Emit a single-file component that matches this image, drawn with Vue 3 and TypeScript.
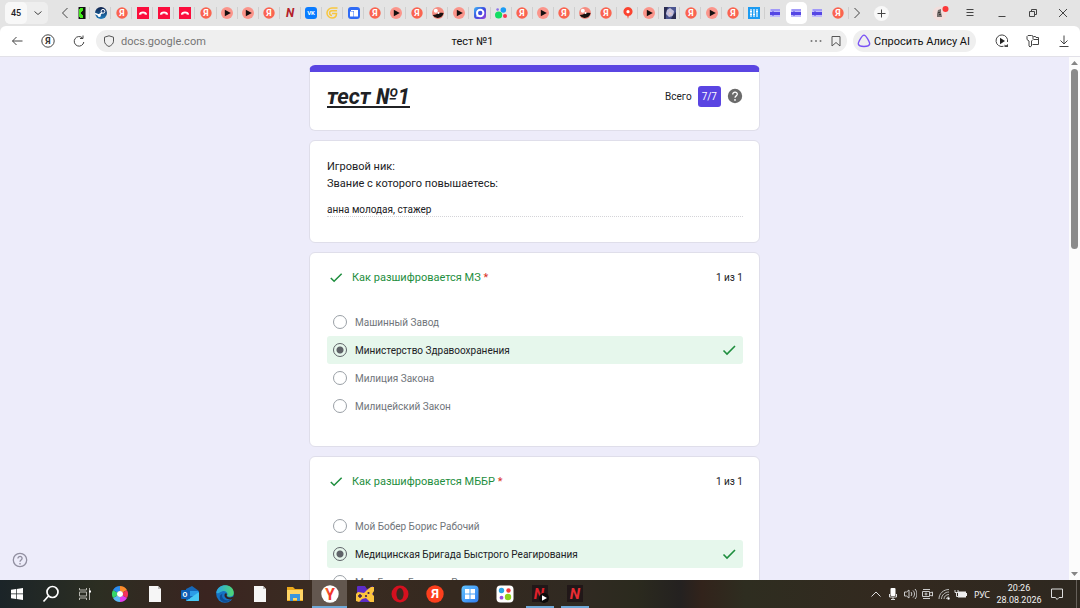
<script setup lang="ts">
import { ref } from 'vue'

interface Question {
  id: string
  title: string
  score: string
  options: string[]
  answer: string
}

interface Letter {
  text: string
  x: number
  y: number
  size: number
  fill: string
  italic?: boolean
}

const tabs: string[] = [
  'kick', 'steam', 'ya', 'phone', 'phone', 'phone', 'ya', 'play', 'play', 'ya', 'netflix', 'vk', 'gold',
  'docs', 'ya', 'play', 'ya', 'face', 'play', 'ring', 'dots', 'ya', 'play', 'ya', 'face', 'ya', 'pin',
  'play', 'anime', 'ya', 'play', 'ya', 'sliders', 'forms', 'forms', 'forms', 'ya',
]
const activeTab = 34

const tabLetters: Record<string, Letter> = {
  ya: { text: 'Я', x: 6, y: 9, size: 9, fill: '#fff' },
  netflix: { text: 'N', x: 6, y: 10, size: 12, fill: '#b3202a', italic: true },
  vk: { text: 'VK', x: 6, y: 8, size: 6, fill: '#fff' },
}

const apps = [
  { icon: 'copilot', label: 'Галерея' },
  { icon: 'file', label: 'Файл' },
  { icon: 'outlook', label: 'Outlook' },
  { icon: 'edge', label: 'Edge' },
  { icon: 'file', label: 'Файл' },
  { icon: 'folder', label: 'Проводник' },
  { icon: 'browser', label: 'Браузер', active: true, running: true },
  { icon: 'games', label: 'Игры' },
  { icon: 'opera', label: 'Opera' },
  { icon: 'yandex', label: 'Яндекс' },
  { icon: 'tiles', label: 'Виджеты' },
  { icon: 'fourdots', label: 'Приложения' },
  { icon: 'nplay', label: 'Видео', running: true },
  { icon: 'nred', label: 'Видео', running: true },
]

const appLetters: Record<string, Letter> = {
  outlook: { text: 'O', x: 4, y: 12, size: 7, fill: '#fff' },
  browser: { text: 'Y', x: 9, y: 15, size: 16, fill: 'url(#g-browser)' },
  yandex: { text: 'Я', x: 9, y: 13, size: 13, fill: '#fff' },
  nplay: { text: 'N', x: 8, y: 14, size: 15, fill: '#e0202a', italic: true },
  nred: { text: 'N', x: 9, y: 14, size: 15, fill: '#e82c33', italic: true },
}

const tray = ['up', 'mic', 'speaker', 'camera', 'wifi', 'battery']

const address = ref('docs.google.com')
const nick = ref('анна молодая, стажер')

const questions = ref<Question[]>([
  {
    id: 'q1',
    title: 'Как разшифровается МЗ',
    score: '1 из 1',
    options: ['Машинный Завод', 'Министерство Здравоохранения', 'Милиция Закона', 'Милицейский Закон'],
    answer: 'Министерство Здравоохранения',
  },
  {
    id: 'q2',
    title: 'Как разшифровается МББР',
    score: '1 из 1',
    options: ['Мой Бобер Борис Рабочий', 'Медицинская Бригада Быстрого Реагирования', 'Моя Белка Быстрая Рука'],
    answer: 'Медицинская Бригада Быстрого Реагирования',
  },
])
</script>

<template>
  <div class="screen">
    <svg class="sprite" aria-hidden="true">
      <defs>
        <linearGradient id="g-ring" x1="0" y1="0" x2="1" y2="1">
          <stop offset="0" stop-color="#3fb7f5" /><stop offset=".5" stop-color="#3d4be0" /><stop offset="1" stop-color="#9a45d8" />
        </linearGradient>
        <linearGradient id="g-steam" x1="0" y1="0" x2="0" y2="1">
          <stop offset="0" stop-color="#10204a" /><stop offset="1" stop-color="#1f7fc0" />
        </linearGradient>
        <linearGradient id="g-edge" x1="0" y1="0" x2="1" y2="0">
          <stop offset="0" stop-color="#2aa5e8" /><stop offset="1" stop-color="#4fd870" />
        </linearGradient>
        <linearGradient id="g-tiles" x1="0" y1="0" x2="1" y2="1">
          <stop offset="0" stop-color="#62c4ff" /><stop offset="1" stop-color="#2f7df0" />
        </linearGradient>
        <linearGradient id="g-browser" x1="0" y1="0" x2="1" y2="0">
          <stop offset="0" stop-color="#fb7a2c" /><stop offset=".5" stop-color="#f0302a" /><stop offset="1" stop-color="#f5452a" />
        </linearGradient>
      </defs>

      <symbol id="t-kick" viewBox="0 0 12 12"><path fill="#111" d="M0 0h12v12H0z" /><path fill="#42e81c" d="M9 1v3H8v1H7v2h1v1h1v3H6v-1H5V2h1V1z" /></symbol>
      <symbol id="t-steam" viewBox="0 0 12 12">
        <circle cx="6" cy="6" r="6" fill="url(#g-steam)" />
        <path d="M0 6.500l4 1.700 3.500-3.200" stroke="#fff" stroke-width="1.600" fill="none" />
        <circle cx="8" cy="4.300" r="1.900" fill="#24477c" stroke="#fff" /><circle cx="4.300" cy="8.500" r="1.500" fill="#fff" />
      </symbol>
      <symbol id="t-ya" viewBox="0 0 12 12"><circle cx="6" cy="6" r="5.700" fill="#fa6450" /></symbol>
      <symbol id="t-phone" viewBox="0 0 12 12"><path fill="#fb0d3c" d="M0 0h12v12H0z" /><path d="M2 7.700C1.500 3.300 10.500 3.300 10 7.700L7.500 7.400V6.500h-3v.900z" fill="#fff" /></symbol>
      <symbol id="t-play" viewBox="0 0 12 12"><circle cx="6" cy="6" r="6" fill="#fb958b" /><path d="M3.800 2.700L9.800 6l-6 3.300z" fill="#151010" /></symbol>
      <symbol id="t-netflix" viewBox="0 0 12 12" />
      <symbol id="t-vk" viewBox="0 0 12 12"><rect width="12" height="12" rx="3" fill="#0a7cff" /></symbol>
      <symbol id="t-gold" viewBox="0 0 12 12" fill="none" stroke="#f8c63e" stroke-width="1.500">
        <path d="M11.500 1H6a5 5 0 0 0 0 10c3 0 4.500-2 4.500-4.500H6" /><path d="M11 3.700H6a2.400 2.400 0 0 0 0 4.800" />
      </symbol>
      <symbol id="t-docs" viewBox="0 0 12 12"><rect width="12" height="12" rx="3" fill="#2f6bf5" /><path d="M2 4.500h3.500v5H2zM6 3h4v6.500H6zM3 3h3v1H3z" fill="#fff" /></symbol>
      <symbol id="t-face" viewBox="0 0 12 12"><circle cx="6" cy="6" r="6" fill="#f58c80" /><path d="M.600 8c3-.500 4-.500 5-1.500s3-1 6-.500A6 6 0 0 1 .600 8z" fill="#18100f" /><circle cx="3.800" cy="3.800" r="2" fill="#fff" /><circle cx="6.500" cy="6" r="1" fill="#fff" /></symbol>
      <symbol id="t-ring" viewBox="0 0 12 12"><rect width="12" height="12" rx="3" fill="url(#g-ring)" /><circle cx="6.200" cy="6" r="3.200" fill="none" stroke="#fff" stroke-width="2" /><path d="M2.500 6v4l3-1z" fill="#fff" /></symbol>
      <symbol id="t-dots" viewBox="0 0 12 12"><circle cx="8.300" cy="3" r="2.800" fill="#199cf5" /><circle cx="3.600" cy="8" r="3.600" fill="#13dd62" /><circle cx="10" cy="9" r="2" fill="#fa3550" /><circle cx="2.600" cy="2.600" r="1.300" fill="#8a70e8" /></symbol>
      <symbol id="t-pin" viewBox="0 0 12 12"><path d="M6 12L5.300 9A4.500 4.500 0 1 1 6.700 9z" fill="#fb432f" /><circle cx="6" cy="4.700" r="1.600" fill="#fff" /></symbol>
      <symbol id="t-anime" viewBox="0 0 12 12"><path fill="#4b5590" d="M0 0h12v12H0z" /><path d="M3 3l3-2 4 3-1 5-4 1-3-3z" fill="#c3bfda" /><path d="M0 0h4L2 5v7H0zM9 8l3-3v7H7z" fill="#2b2d52" /><path d="M5 5l3 1-1 2-2-1z" fill="#e2c6ca" /></symbol>
      <symbol id="t-sliders" viewBox="0 0 12 12"><path fill="#1b9bf2" d="M0 0h12v12H0z" /><path d="M3 2v8M6 2v8M9 2v8M2 4.500h2M5 7.500h2M8 4.500h2M2 7.500h2" stroke="#fff" stroke-width="1.200" /></symbol>
      <symbol id="t-forms" viewBox="0 0 12 12"><path d="M1 2h10v8H1z" fill="#c0bafc" /><path d="M2 2h9v2H2z" fill="#a199f8" /><path d="M1 5h2l1-1 1 1h6v3H5L4 9 3 8H1z" fill="#5546e4" /></symbol>

      <symbol id="a-copilot" viewBox="0 0 18 18" fill="none" stroke-width="5">
        <path d="M9 3.500a5.500 5.500 0 0 1 4.800 2.800" stroke="#fb8b2c" /><path d="M13.800 6.300a5.500 5.500 0 0 1 0 5.400" stroke="#f6335c" /><path d="M13.800 11.700A5.500 5.500 0 0 1 9 14.500" stroke="#e13df0" />
        <path d="M9 14.500a5.500 5.500 0 0 1-4.800-2.800" stroke="#5bb9f5" /><path d="M4.200 11.700a5.500 5.500 0 0 1 0-5.400" stroke="#35d66a" /><path d="M4.200 6.300A5.500 5.500 0 0 1 9 3.500" stroke="#2b8df0" />
        <circle cx="9" cy="9" r="3" fill="#fff" stroke="none" />
      </symbol>
      <symbol id="a-file" viewBox="0 0 18 18"><path d="M3 1h9l3 3v13H3z" fill="#f6f6f6" /><path d="M12 1v3h3z" fill="#bbb" /></symbol>
      <symbol id="a-outlook" viewBox="0 0 18 18"><path d="M5 4l6-3 7 5v10H5z" fill="#1567b8" /><path d="M5 6h12v5H5z" fill="#2c9be8" /><path d="M5 16l13-9v8a1 1 0 0 1-1 1z" fill="#47c8f5" /><rect y="5" width="9" height="9" rx="1" fill="#0f5fb4" /></symbol>
      <symbol id="a-edge" viewBox="0 0 18 18"><circle cx="9" cy="9" r="8.800" fill="#1672c4" /><path d="M.300 8C1.500-2.500 17.500-2 17.800 8c0 4-5 4.500-6.800 3 2-3-2-6-5-4.500C3 7.500 2 9 .300 8z" fill="url(#g-edge)" /><path d="M6.500 8.500c-2 5 3 8 8.500 6-5 5.500-13 2-11-4z" fill="#0f4d96" /><path d="M10.500 8.500c1 1-.500 2 .500 3 1.500 1.500 5 1.300 6.500-.500l-1 3c-4 1.500-8-1-8-3.500 0-1.500 1-2.500 2-2z" fill="#33221f" /></symbol>
      <symbol id="a-folder" viewBox="0 0 18 18"><path d="M1 2h6l2 2h8v12H1z" fill="#eba91c" /><path d="M1 5h16v10H1z" fill="#ffd566" /><path d="M4 9h10v7h-3v-3H7v3H4z" fill="#3b96dd" /></symbol>
      <symbol id="a-browser" viewBox="0 0 18 18"><circle cx="9" cy="9" r="8.700" fill="#fff" /></symbol>
      <symbol id="a-games" viewBox="0 0 18 18"><path d="M1 2q0-1 1-1h7l2 3 6-3v16H3L1 12z" fill="#5c2cc8" /><path d="M0 16V9l2-2 6 1 3-3 4-3h3v4l-2 3 2 2v6h-4l-4-4-4 1-3 3z" fill="#fcc43e" /><path d="M4 9v4M2 11h4" stroke="#3a1b54" stroke-width="1.400" /><circle cx="10" cy="11" r="1.100" fill="#3a1b54" /><circle cx="12.500" cy="8" r="1.100" fill="#3a1b54" /></symbol>
      <symbol id="a-opera" viewBox="0 0 18 18"><circle cx="9" cy="9" r="8.500" fill="#d5101f" /><ellipse cx="9" cy="9" rx="3.600" ry="6" fill="#3a2a22" /></symbol>
      <symbol id="a-yandex" viewBox="0 0 18 18"><circle cx="9" cy="9" r="8.700" fill="#fc3f1d" /></symbol>
      <symbol id="a-tiles" viewBox="0 0 18 18"><rect x=".500" y=".500" width="17" height="17" rx="4" fill="url(#g-tiles)" /><path d="M4 4h4.500v4.500H4zM9.500 4H14v4.500H9.500zM4 9.500h4.500V14H4zM9.500 9.500H14V14H9.500z" fill="#fff" /></symbol>
      <symbol id="a-fourdots" viewBox="0 0 18 18"><rect x=".500" y=".500" width="17" height="17" rx="4" fill="#fff" /><circle cx="5.500" cy="5.500" r="2.700" fill="#2aa4e6" /><circle cx="12.500" cy="5.500" r="2.200" fill="#f5393c" /><circle cx="5.500" cy="12.700" r="1.900" fill="#9b4be0" /><circle cx="12" cy="12" r="3.200" fill="#8fd21c" /></symbol>
      <symbol id="a-nplay" viewBox="0 0 18 18"><path d="M1 0h16v17H1z" fill="#211718" /></symbol>
      <symbol id="a-nred" viewBox="0 0 18 18"><path d="M1 0h16v17H1z" fill="#211718" /></symbol>
      <symbol id="badge-play" viewBox="0 0 18 18"><circle cx="13" cy="13" r="5" fill="#0c0a0a" /><path d="M11 10.200l5 2.800-5 2.800z" fill="#fff" /></symbol>

      <symbol id="y-up" viewBox="0 0 14 14"><path d="M2.500 9.500L7 5l4.500 4.500" fill="none" stroke="#ddd" /></symbol>
      <symbol id="y-mic" viewBox="0 0 14 14"><rect x="4.500" y="1" width="5" height="8" rx="1" fill="#fff" /><path d="M3.500 7v3h7V7M7 10v3M5 12.500h4" fill="none" stroke="#ddd" /></symbol>
      <symbol id="y-speaker" viewBox="0 0 14 14" fill="none" stroke="#ccc"><path d="M1.500 5h2L6 3v8L3.500 9h-2zM8 5c1 1 1 3 0 4M10 3.500c2 2 2 5 0 7M12 2c2.500 3 2.500 7 0 10" /></symbol>
      <symbol id="y-camera" viewBox="0 0 14 14" fill="none" stroke="#ccc"><path d="M3 2.500h7M3 11.500h7M2.500 4.500h7v5h-7zM9.500 6l3-1v4l-3-1" /><circle cx="6" cy="7" r="1" /></symbol>
      <symbol id="y-wifi" viewBox="0 0 14 14" fill="none" stroke="#bbb"><path d="M2 12C2 6.500 6.500 2.500 12 2.500M4.500 12c0-4 3.500-7 7.500-7M7 12c0-2.500 2-4.500 5-4.500M9.500 12c0-1.500 1-2 2.500-2" /><circle cx="11.500" cy="11.500" r="1" fill="#fff" /></symbol>
      <symbol id="y-battery" viewBox="0 0 14 14"><path d="M4 4.500h8V6h1v3h-1v1.500H4z" fill="#eee" /><path d="M1 3v2.500h3V3M2.500 5.500v4H5" fill="none" stroke="#ddd" /></symbol>

      <symbol id="check" viewBox="0 0 18 18"><path d="M3.500 9.500l3.500 3.500 8-8" fill="none" stroke="#1e8e3e" stroke-width="1.600" /></symbol>
    </svg>

    <header class="tabbar">
      <div class="counter">
        <button class="count">45</button>
        <button class="drop" aria-label="Список вкладок"><svg width="10" height="10" viewBox="0 0 10 10"><path d="M1.500 3.500L5 6.500l3.500-3" class="line" /></svg></button>
      </div>
      <button class="tabnav prev" aria-label="Назад по вкладкам"><svg width="8" height="12" viewBox="0 0 8 12"><path d="M6.500 1L1.500 6l5 5" class="line" /></svg></button>
      <nav class="tabs">
        <button v-for="(t, i) in tabs" :key="i" class="tab" :class="{ active: i === activeTab, quiet: i >= activeTab - 1 && i <= activeTab + 1, cut: i === 0 }" :aria-label="`Вкладка ${i + 1}`">
          <svg width="12" height="12" viewBox="0 0 12 12">
            <use :href="`#t-${t}`" />
            <text v-if="tabLetters[t]" :x="tabLetters[t].x" :y="tabLetters[t].y" :font-size="tabLetters[t].size" :fill="tabLetters[t].fill" :font-style="tabLetters[t].italic ? 'italic' : 'normal'" text-anchor="middle" class="glyph">{{ tabLetters[t].text }}</text>
          </svg>
        </button>
      </nav>
      <button class="tabnav next" aria-label="Вперёд по вкладкам"><svg width="8" height="12" viewBox="0 0 8 12"><path d="M1.500 1l5 5-5 5" class="line" /></svg></button>
      <button class="newtab" aria-label="Новая вкладка"><svg width="15" height="15" viewBox="0 0 15 15"><circle cx="7.500" cy="7.500" r="7.500" fill="#f8f8f8" /><path d="M7.500 3.500v8M3.500 7.500h8" class="line" /></svg></button>
      <button class="profile" aria-label="Профиль"><svg width="18" height="16" viewBox="0 0 18 16"><circle cx="7.500" cy="8.500" r="7" fill="#f2dedc" /><path d="M5 12V9l1-4 3-1v3l1 5z" fill="#77706e" /><path d="M6 7h2v1H6zM7 9h2v1H7z" fill="#3d3937" /><circle cx="13.500" cy="4" r="3" fill="#fb3838" /></svg></button>
      <button class="menu" aria-label="Меню"><svg width="10" height="10" viewBox="0 0 10 10"><path d="M1.500 1.500h7M1.500 4.500h7M1.500 7.500h7" class="line" /></svg></button>
      <button class="minimize" aria-label="Свернуть"><svg width="10" height="10" viewBox="0 0 10 10"><path d="M1.500 8.500h7" class="line" /></svg></button>
      <button class="restore" aria-label="Восстановить"><svg width="10" height="10" viewBox="0 0 10 10"><path d="M1.500 3.500h5v5h-5zM3.500 3V1.500h5v5H7" class="line" /></svg></button>
      <button class="close" aria-label="Закрыть"><svg width="10" height="10" viewBox="0 0 10 10"><path d="M1 1l8 8M9 1L1 9" class="line" /></svg></button>
    </header>

    <div class="toolbar">
      <button class="tool" aria-label="Назад"><svg width="12" height="12" viewBox="0 0 12 12"><path d="M11.500 6h-10M5.500 2l-4 4 4 4" class="line" /></svg></button>
      <button class="tool" aria-label="Яндекс"><svg width="14" height="14" viewBox="0 0 14 14"><circle cx="7" cy="7" r="6.200" class="line" /><text x="7" y="10" text-anchor="middle" class="glyph" font-size="9" fill="#333">Я</text></svg></button>
      <button class="tool" aria-label="Обновить"><svg width="12" height="12" viewBox="0 0 12 12"><path d="M9.500 3A4.800 4.800 0 1 0 10.800 7M10 .500V3.500H7" class="line" /></svg></button>
      <div class="address">
        <label class="where">
          <svg width="12" height="12" viewBox="0 0 12 12"><path d="M6 .800l4.500 1.400v4C10.500 8.500 8.500 10.500 6 11.500 3.500 10.500 1.500 8.500 1.500 6.200v-4z" fill="none" stroke="#555" /></svg>
          <input v-model="address" type="text" aria-label="Адрес">
        </label>
        <span class="pagetitle">тест №1</span>
        <span class="tail">
          <button aria-label="Ещё"><svg width="12" height="12" viewBox="0 0 12 12" fill="#777"><circle cx="1.500" cy="6" r="1" /><circle cx="6" cy="6" r="1" /><circle cx="10.500" cy="6" r="1" /></svg></button>
          <button aria-label="Закладка"><svg width="12" height="12" viewBox="0 0 12 12"><path d="M2 1.500h8v9.500L6 7.500 2 11z" fill="none" stroke="#555" /></svg></button>
        </span>
      </div>
      <button class="alice"><svg width="14" height="14" viewBox="0 0 14 14"><path d="M7 1.200c1.300 0 2.200 1.300 3.500 3.500S12.900 8.700 12.700 10C12.300 12 9.500 12.500 7 12.500S1.700 12 1.300 10C1.100 8.700 2.200 6.900 3.500 4.700S5.700 1.200 7 1.200z" fill="none" stroke="#7a52f5" stroke-width="1.300" /></svg>Спросить Алису AI</button>
      <div class="extras">
        <button class="tool" aria-label="Видео"><svg width="14" height="14" viewBox="0 0 14 14"><path d="M8.500 12.300A5.800 5.800 0 1 1 12.500 8" class="line" /><path d="M5 3.700L10 7l-5 3.300z" fill="#222" /><path d="M9.500 13V10.500l1.500 1 2-1.500v3z" fill="#444" /></svg></button>
        <button class="tool" aria-label="Пароли"><svg width="14" height="14" viewBox="0 0 14 14"><path d="M7 5V2L5.500 1.500H2L1 2.500v3L3 7v5l1 1 1.500-1V7L7 5.500M6.500 10.500h6v-7H10L9.500 2.500H7.500M7.500 5.500h5" class="line" /></svg></button>
        <button class="tool" aria-label="Загрузки"><svg width="12" height="12" viewBox="0 0 12 12"><path d="M6 .500v8M2.500 5.500L6 9l3.500-3.500M1.500 11.500h9" class="line" /></svg></button>
      </div>
    </div>

    <div class="viewport">
      <main class="page">
        <form class="form" @submit.prevent>
          <section class="card head">
            <h1>тест №1</h1>
            <div class="total">
              <span>Всего</span><b>7/7</b>
              <button type="button" aria-label="Подсказка"><svg width="16" height="16" viewBox="0 0 16 16"><circle cx="8" cy="8" r="7.200" fill="#6b6b6b" /><path d="M5.700 6.500c0-3.200 4.800-2.900 4.600-.200C10.200 8 8 7.800 8 9.800" fill="none" stroke="#fff" stroke-width="1.300" /><circle cx="8" cy="11.900" r=".900" fill="#fff" /></svg></button>
            </div>
          </section>

          <section class="card nick">
            <label for="nick">Игровой ник:<br>Звание с которого повышаетесь:</label>
            <input id="nick" v-model="nick" type="text" readonly>
          </section>

          <section v-for="q in questions" :key="q.id" class="card">
            <div class="qhead">
              <svg width="18" height="17"><use href="#check" /></svg>
              <h2 :id="q.id">{{ q.title }} <em>*</em></h2>
              <span class="score">{{ q.score }}</span>
            </div>
            <div class="options" role="radiogroup" :aria-labelledby="q.id">
              <label v-for="o in q.options" :key="o" class="option" :class="{ right: o === q.answer }">
                <input type="radio" :name="q.id" :value="o" :checked="o === q.answer">
                <span>{{ o }}</span>
                <svg v-if="o === q.answer" width="18" height="18"><use href="#check" /></svg>
              </label>
            </div>
          </section>
        </form>
        <button class="help" aria-label="Справка"><svg width="16" height="16" viewBox="0 0 16 16" fill="none" stroke="#918fa0" stroke-width="1.300"><circle cx="8" cy="8" r="6.700" /><path d="M5.900 6.600c0-3 4.400-2.700 4.200-.200C10 8 8 7.900 8 9.700" /><path d="M8 11v1.400" /></svg></button>
      </main>
      <div class="scroll" aria-hidden="true">
        <svg width="7" height="4" viewBox="0 0 7 4"><path d="M0 4l3.500-4L7 4z" fill="#858585" /></svg>
        <div class="track"><div class="thumb"></div></div>
        <svg width="7" height="4" viewBox="0 0 7 4"><path d="M0 0h7L3.500 4z" fill="#858585" /></svg>
      </div>
    </div>

    <footer class="taskbar">
      <button class="sys" aria-label="Пуск"><svg width="12" height="12" viewBox="0 0 12 12"><path d="M0 1.700l5-.700v4.600H0zM5.700.900L12 0v5.600H5.700zM0 6.300h5V11l-5-.700zM5.700 6.300H12V12l-6.300-.900z" fill="#fff" /></svg></button>
      <button class="sys" aria-label="Поиск"><svg width="18" height="18" viewBox="0 0 18 18" fill="none" stroke="#fff" stroke-width="1.700"><circle cx="10.500" cy="7" r="5.500" /><path d="M6.500 11L1.500 16.500" /></svg></button>
      <button class="sys" aria-label="Представление задач"><svg width="14" height="14" viewBox="0 0 14 14" fill="none" stroke="#b5b5ae"><path d="M1.500 1v2h7V1M1.500 5h7v4h-7zM1.500 13v-2h7v2M11.500 1v12" /><path d="M11 4.500h2" stroke="#fff" stroke-width="2" /></svg></button>
      <button v-for="(a, i) in apps" :key="i" class="app" :class="{ running: a.running, active: a.active }" :aria-label="a.label">
        <svg width="18" height="18" viewBox="0 0 18 18">
          <use :href="`#a-${a.icon}`" />
          <text v-if="appLetters[a.icon]" :x="appLetters[a.icon].x" :y="appLetters[a.icon].y" :font-size="appLetters[a.icon].size" :fill="appLetters[a.icon].fill" :font-style="appLetters[a.icon].italic ? 'italic' : 'normal'" text-anchor="middle" class="glyph">{{ appLetters[a.icon].text }}</text>
          <use v-if="a.icon === 'nplay'" href="#badge-play" />
        </svg>
      </button>
      <div class="tray">
        <button v-for="t in tray" :key="t" class="trayicon" :aria-label="t"><svg width="14" height="14"><use :href="`#y-${t}`" /></svg></button>
        <button class="lang">РУС</button>
        <button class="clock"><span>20:26</span><span>28.08.2026</span></button>
        <button class="notify" aria-label="Уведомления"><svg width="14" height="14" viewBox="0 0 14 14"><path d="M1.500 2h11v8.500H9L7 12.500l-1.500-2h-4z" fill="none" stroke="#ddd" /></svg></button>
      </div>
    </footer>
  </div>
</template>

<style>
html,
body {
  background: #edecfa;
}
</style>

<style scoped>
.screen {
  display: flex;
  flex-direction: column;
  height: 100vh;
  overflow: hidden;
  background: #e4e4e4;
  color: #202124;
  font-family: Roboto, "Liberation Sans", sans-serif;
  font-size: 10px;
}
.sprite {
  position: absolute;
  width: 0;
  height: 0;
}
* {
  box-sizing: border-box;
}
button {
  display: flex;
  align-items: center;
  justify-content: center;
  flex: none;
  padding: 0;
  border: 0;
  background: none;
  color: inherit;
  font: inherit;
}
svg {
  flex: none;
}
.line {
  fill: none;
  stroke: #444;
  stroke-width: 1;
}
.glyph {
  font-family: "Liberation Sans Narrow", Roboto, sans-serif;
  font-weight: 700;
}

/* tab strip */
.tabbar {
  display: flex;
  flex: none;
  align-items: center;
  height: 26px;
  padding-left: 5px;
}
.counter {
  display: flex;
  height: 22px;
  border-radius: 5px;
  background: #eee;
}
.count {
  width: 22px;
  border-radius: 5px;
  background: #f8f8f8;
  font-size: 9px;
  font-weight: 500;
}
.drop {
  width: 21px;
}
.tabnav {
  width: 16px;
  height: 26px;
}
.prev {
  width: 21px;
  padding-left: 12px;
}
.tabs {
  display: flex;
  flex: 1;
  min-width: 0;
  overflow: hidden;
}
.tab {
  flex: 1;
  min-width: 0;
  height: 22px;
  background: linear-gradient(#cfcfcf, #cfcfcf) right center / 1px 12px no-repeat;
}
.tab.quiet {
  background: none;
}
.tab.active {
  border-radius: 5px;
  background: #fff;
}
.tab.cut svg {
  clip-path: inset(0 0 0 5px);
}
.newtab {
  width: 32px;
}
.profile {
  width: 30px;
  margin-left: 29px;
}
.menu {
  width: 28px;
}
.minimize {
  width: 35px;
}
.restore {
  width: 27px;
}
.close {
  width: 34px;
}

/* toolbar */
.toolbar {
  display: flex;
  flex: none;
  align-items: center;
  height: 31px;
  border-bottom: 1px solid #e2e1e8;
  border-radius: 6px 6px 0 0;
  background: #fff;
  padding: 0 1px;
}
.tool {
  width: 31px;
  height: 22px;
}
.address {
  display: grid;
  flex: 1;
  grid-template-columns: 1fr auto 1fr;
  align-items: center;
  height: 22px;
  margin-left: 2px;
  padding: 0 5px 0 7px;
  border-radius: 11px;
  background: #efefef;
}
.where {
  display: flex;
  align-items: center;
  gap: 6px;
}
.where input {
  width: 160px;
  padding: 0;
  border: 0;
  outline: 0;
  background: none;
  color: #757575;
  font: inherit;
  font-size: 11px;
}
.pagetitle,
.alice {
  color: #111;
  font-size: 11px;
}
.tail {
  display: flex;
  justify-content: flex-end;
  gap: 8px;
}
.alice {
  gap: 3px;
  height: 22px;
  margin-left: 6px;
  padding: 0 6px 0 4px;
  border-radius: 11px;
  background: #efefef;
}
.extras {
  display: flex;
  margin-left: 10px;
}

/* page */
.viewport {
  display: flex;
  flex: 1;
  min-height: 0;
}
.page {
  position: relative;
  flex: 1;
  padding: 8px 16px 0;
  overflow: hidden;
  background: #edecfa;
}
.form {
  display: flex;
  flex-direction: column;
  gap: 9px;
  max-width: 451px;
  margin: 0 auto;
}
.card {
  padding: 16px 16px 25px 17px;
  border: 1px solid #dfdeea;
  border-radius: 6px;
  background: #fff;
}
.head {
  display: flex;
  align-items: flex-start;
  justify-content: space-between;
  padding-top: 11px;
  padding-bottom: 19px;
  border-top: 7px solid #5a45e2;
}
h1 {
  margin: 0;
  font-size: 22px;
  font-style: italic;
  font-weight: 700;
  line-height: 28px;
  text-decoration: underline;
}
.total {
  display: flex;
  align-items: center;
  gap: 6px;
  height: 26px;
}
.total b {
  padding: 0 4px;
  border-radius: 3px;
  background: #5a45e2;
  color: #fff;
  font-weight: 400;
  line-height: 21px;
}
.nick {
  display: flex;
  flex-direction: column;
  gap: 10px;
  padding-top: 17px;
}
.nick label {
  font-size: 11px;
  line-height: 17px;
}
.nick input {
  width: 100%;
  height: 15px;
  padding: 0;
  border: 0;
  border-bottom: 1px dotted #d4d4d8;
  outline: 0;
  background: none;
  color: #202124;
  font: inherit;
}
.qhead {
  display: flex;
  align-items: center;
  gap: 7px;
}
h2 {
  flex: 1;
  margin: 0;
  color: #1e8e3e;
  font-size: 11px;
  font-weight: 400;
  line-height: 17px;
}
h2 em {
  color: #d93025;
  font-style: normal;
}
.options {
  padding: 22px 0 1px;
}
.option {
  display: flex;
  align-items: center;
  gap: 8px;
  height: 28px;
  padding: 0 5px 0 6px;
  border-radius: 3px;
  color: #70757a;
}
.option span {
  flex: 1;
}
.option.right {
  background: #e6f7ec;
  color: #202124;
}
.option input {
  width: 14px;
  height: 14px;
  margin: 0;
  border: 1px solid #9aa0a6;
  border-radius: 50%;
  appearance: none;
}
.option input:checked {
  border-color: #5f6368;
  background: radial-gradient(circle, #5f6368 3px, transparent 4px);
}
.help {
  position: absolute;
  bottom: 12px;
  left: 12px;
}
.scroll {
  display: flex;
  flex: none;
  flex-direction: column;
  align-items: center;
  gap: 4px;
  width: 11px;
  padding: 4px 0;
  background: #fcfcfc;
}
.track {
  flex: 1;
}
.thumb {
  width: 7px;
  height: 36%;
  border-radius: 4px;
  background: #8b8b8b;
}

/* taskbar */
.taskbar {
  display: flex;
  flex: none;
  height: 28px;
  background: linear-gradient(90deg, #1b2428 0, #2c2e22 9%, #3a2420 19%, #3a2c22 29%, #35291f 42%, #302a22 54%, #2b2a1e 59%, #242120 63%, #32231b 65%, #2e2d20 69%, #33291f 82%, #2e2820 100%);
  color: #f2f2f2;
}
.sys {
  width: 34px;
}
.app {
  width: 35px;
}
.app.running {
  background: linear-gradient(#6fa9d8, #6fa9d8) center bottom / 28px 2px no-repeat;
}
.app.active {
  background-color: #63574f;
  background-size: 100% 2px;
}
.tray {
  display: flex;
  margin-left: auto;
  border-right: 1px solid #66605a;
  margin-right: 3px;
}
.trayicon {
  width: 17px;
}
.lang {
  width: 26px;
  font: 9px "Noto Sans", sans-serif;
}
.clock {
  flex-direction: column;
  width: 48px;
  font: 9px/13px Roboto, sans-serif;
}
.clock span {
  font-size: 8px;
}
.notify {
  width: 28px;
  margin-right: 5px;
}
.clock span {
  font-size: 9px;
  line-height: 12px;
}
</style>
